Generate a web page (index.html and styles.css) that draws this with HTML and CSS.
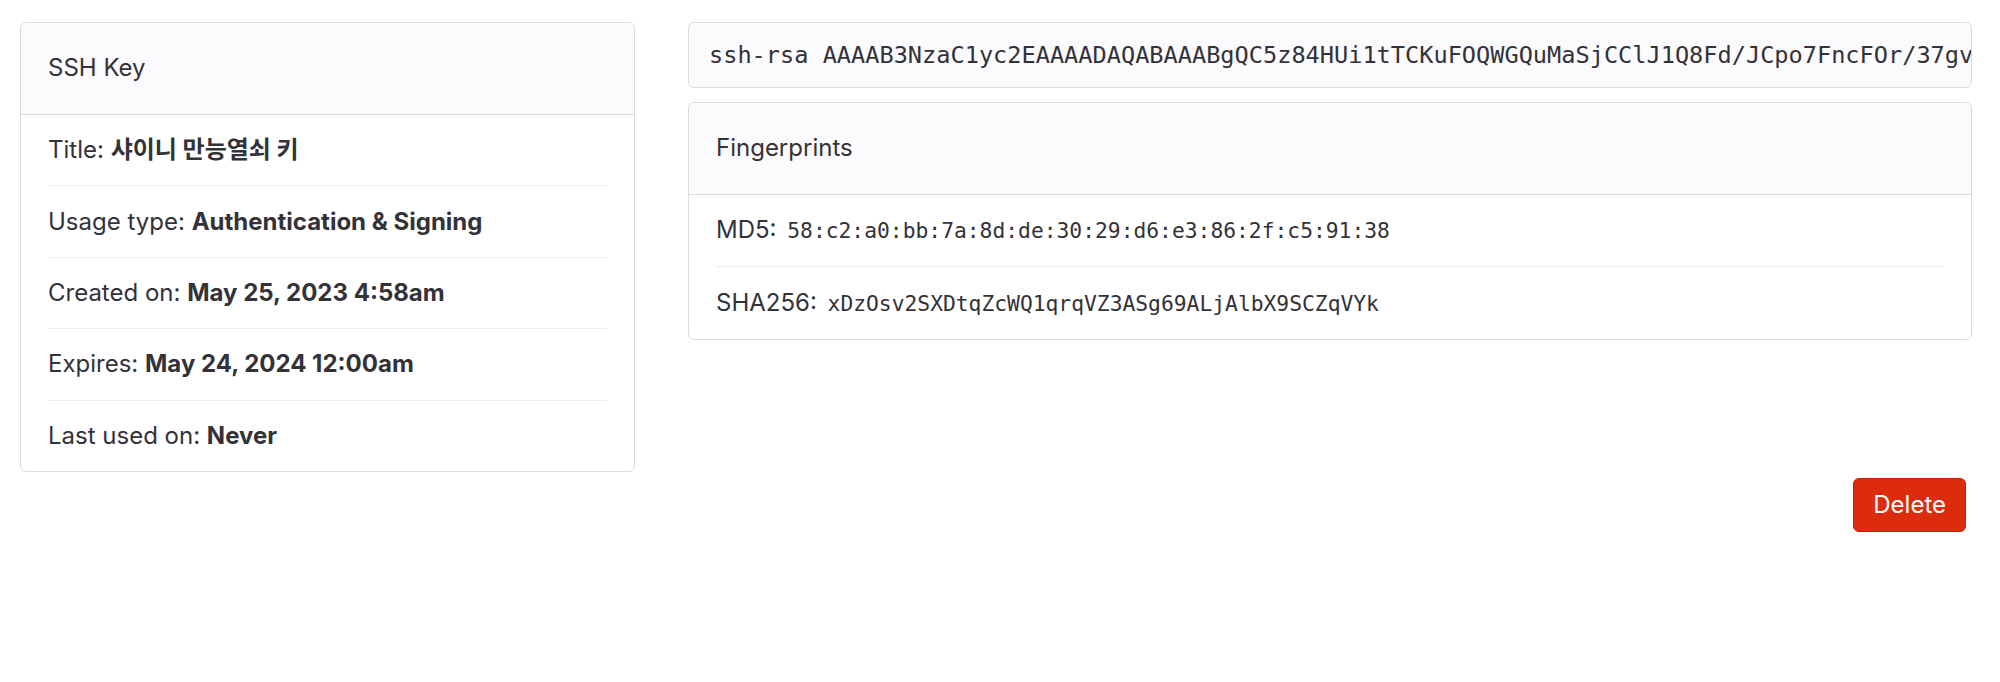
FILE: index.html
```html
<!DOCTYPE html>
<html lang="en">
<head>
<meta charset="utf-8">
<title>SSH Key</title>
<link rel="stylesheet" href="styles.css">
</head>
<body>
<div class="page">
  <div class="columns">
    <div class="card">
      <div class="card-header">SSH Key</div>
      <ul class="list">
        <li>Title: <strong>샤이니 만능열쇠 키</strong></li>
        <li>Usage type: <strong>Authentication &amp; Signing</strong></li>
        <li>Created on: <strong>May 25, 2023 4:58am</strong></li>
        <li>Expires: <strong>May 24, 2024 12:00am</strong></li>
        <li>Last used on: <strong>Never</strong></li>
      </ul>
    </div>
    <div class="right">
      <pre class="key">ssh-rsa AAAAB3NzaC1yc2EAAAADAQABAAABgQC5z84HUi1tTCKuFOQWGQuMaSjCClJ1Q8Fd/JCpo7FncFOr/37gv</pre>
      <div class="card">
        <div class="card-header">Fingerprints</div>
        <ul class="list">
          <li>MD5: <code class="fp">58:c2:a0:bb:7a:8d:de:30:29:d6:e3:86:2f:c5:91:38</code></li>
          <li>SHA256: <code class="fp">xDzOsv2SXDtqZcWQ1qrqVZ3ASg69ALjAlbX9SCZqVYk</code></li>
        </ul>
      </div>
    </div>
  </div>
  <div class="actions">
    <button class="btn-danger" type="button">Delete</button>
  </div>
</div>
</body>
</html>
```

FILE: styles.css
```css
html, body {
  margin: 0;
  padding: 0;
  background: #ffffff;
}

body {
  font-family: Inter, "Noto Sans CJK KR", sans-serif;
  font-size: 24px;
  line-height: 32px;
  color: #333238;
}

.page {
  padding: 22px 28px 0 20px;
}

.columns {
  display: grid;
  grid-template-columns: 615px minmax(0, 1fr);
  column-gap: 53px;
  align-items: start;
}

.card {
  border: 1px solid #dcdcde;
  border-radius: 6px;
  overflow: hidden;
  background: #ffffff;
}

.card-header {
  background: #fbfafd;
  border-bottom: 1px solid #dcdcde;
  padding: 29px 27px 30px;
}

.list {
  list-style: none;
  margin: 0 27px;
  padding: 0;
}

.list li {
  padding: 19.2px 0;
  border-bottom: 1px solid #ececef;
}

.list li:last-child {
  border-bottom: none;
}

.list strong {
  font-weight: 700;
}

.right {
  display: flex;
  flex-direction: column;
  gap: 14px;
  min-width: 0;
}

.key {
  margin: 0;
  background: #fbfafd;
  border: 1px solid #dcdcde;
  border-radius: 6px;
  padding: 16px 0 16px 20px;
  font-family: "DejaVu Sans Mono", "Liberation Mono", monospace;
  font-size: 23.6px;
  line-height: 32px;
  white-space: nowrap;
  overflow: hidden;
  color: #333238;
}

.fp {
  font-family: "DejaVu Sans Mono", "Liberation Mono", monospace;
  font-size: 21.3px;
  margin-left: 4px;
}

.actions {
  display: flex;
  justify-content: flex-end;
  margin-top: 6px;
  padding-right: 6px;
}

.btn-danger {
  font-family: Inter, sans-serif;
  font-size: 24px;
  line-height: 32px;
  color: #ffffff;
  background: #dd2b0e;
  border: 1px solid #c91c00;
  border-radius: 6px;
  padding: 10px 19px;
  cursor: pointer;
}
```
